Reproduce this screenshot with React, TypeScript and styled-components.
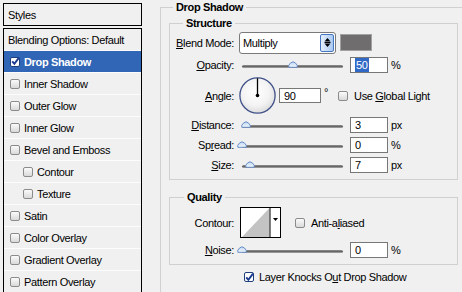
import React from "react";
import styled, { createGlobalStyle } from "styled-components";

const GlobalStyle = createGlobalStyle`
  html, body { margin: 0; padding: 0; background: #f0f0f0; overflow: hidden; }
  body {
    font-family: "Liberation Sans", Arial, sans-serif;
    font-size: 11px;
    color: #000;
    letter-spacing: -0.35px;
  }
  #root { width: 462px; height: 292px; overflow: hidden; }
`;

const Page = styled.div`
  display: flex;
  align-items: flex-start;
  box-sizing: border-box;
  width: 462px;
  height: 292px;
  padding: 3px 0 0 3px;
  overflow: hidden;
`;

/* ---------- left: styles list ---------- */
const StylesColumn = styled.div`
  width: 139px;
  flex: none;
  display: flex;
  flex-direction: column;
  gap: 2px;
`;

const StylesHeader = styled.div`
  box-sizing: border-box;
  height: 23px;
  border: 1px solid #000;
  padding-left: 4px;
  display: flex;
  align-items: center;
`;

const StyleList = styled.div`
  border: 1px solid #000;
  border-bottom: none;
  height: 300px;
`;

const StyleRow = styled.div<{ $selected?: boolean; $indent: number }>`
  box-sizing: border-box;
  height: 22px;
  border-bottom: 1px solid #fcfcfc;
  display: flex;
  align-items: center;
  gap: 4px;
  padding-left: ${(p) => p.$indent}px;
  background: ${(p) => (p.$selected ? "#3165b5" : "transparent")};
  color: ${(p) => (p.$selected ? "#fff" : "#000")};
  font-weight: ${(p) => (p.$selected ? "bold" : "normal")};
  white-space: nowrap;
`;

/* ---------- checkbox ---------- */
const Box = styled.span<{ $checked?: boolean }>`
  box-sizing: border-box;
  width: 10px;
  height: 10px;
  flex: none;
  border: 1px solid ${(p) => (p.$checked ? "#1f3f7c" : "#8b8b8b")};
  border-radius: 2px;
  background: ${(p) => (p.$checked ? "#fff" : "linear-gradient(#fbfbfb, #d9d9d9)")};
  display: flex;
  align-items: center;
  justify-content: center;
  overflow: visible;
`;

const CheckMark = () => (
  <svg width="9" height="9" viewBox="0 0 9 9" style={{ overflow: "visible" }}>
    <path d="M1.2 4.3 L3.4 6.8 L8 0.6" fill="none" stroke="#1b3a8f" strokeWidth="1.9" />
  </svg>
);

const CheckBox: React.FC<{ checked?: boolean }> = ({ checked }) => (
  <Box $checked={checked}>{checked ? <CheckMark /> : null}</Box>
);

/* ---------- right: group boxes ---------- */
const Group = styled.fieldset<{ $width: number }>`
  margin: 0;
  padding: 0;
  min-width: 0;
  border: 1px solid #d0d0d0;
  width: ${(p) => p.$width}px;
  box-sizing: border-box;
  flex: none;
`;

const GroupTitle = styled.legend<{ $offset: number }>`
  margin-left: ${(p) => p.$offset}px;
  padding: 0 3px;
  font-weight: bold;
  line-height: 13px;
  height: 13px;
`;

const EffectPanel = styled(Group)`
  margin: -2px 0 0 18px;
  height: 310px;
`;

const EffectBody = styled.div`
  padding-left: 8px;
  display: flex;
  flex-direction: column;
  align-items: flex-start;
`;

const StructureGroup = styled(Group)`
  margin-top: 3px;
`;

const QualityGroup = styled(Group)`
  margin-top: 11px;
`;

const GroupBody = styled.div<{ $top: number; $bottom: number }>`
  display: flex;
  flex-direction: column;
  padding: ${(p) => p.$top}px 0 ${(p) => p.$bottom}px 0;
`;

const FieldRow = styled.div<{ $h: number }>`
  height: ${(p) => p.$h}px;
  display: flex;
  align-items: center;
  white-space: nowrap;
`;

const FieldLabel = styled.span`
  width: 64px;
  flex: none;
  text-align: right;
  margin-right: 5px;
`;

const Accel = styled.span`
  text-decoration: underline;
  text-underline-offset: 1px;
`;

/* select */
const Select = styled.div`
  box-sizing: border-box;
  width: 97px;
  height: 22px;
  border: 1px solid #7a7a7a;
  border-radius: 3px;
  background: #fff;
  display: flex;
  align-items: stretch;
  padding: 1px;
  flex: none;
`;

const SelectText = styled.span`
  flex: 1;
  padding-left: 2px;
  display: flex;
  align-items: center;
`;

const SelectButton = styled.span`
  box-sizing: border-box;
  width: 14px;
  border: 1px solid #4675c2;
  border-radius: 2px;
  background: linear-gradient(to right, #e6f0fc, #a9c9f0);
  display: flex;
  align-items: center;
  justify-content: center;
`;

const Swatch = styled.span`
  box-sizing: border-box;
  width: 32px;
  height: 17px;
  margin-left: 4px;
  border: 1px solid #a2a2a2;
  background: #6f6d6d;
  flex: none;
`;

/* slider */
const Slider = styled.div`
  position: relative;
  width: 107px;
  height: 10px;
  flex: none;
  margin-top: 1px;
`;

const Track = styled.div`
  margin: 4px 3px 0 3px;
  height: 3px;
  border-radius: 2px;
  background: linear-gradient(#9a9a9a, #5f5f5f 45%, #8c8c8c 80%, #c8c8c8);
`;

const Thumb = styled.svg`
  position: absolute;
  top: 0;
`;

const SliderControl: React.FC<{ pct: number }> = ({ pct }) => (
  <Slider>
    <Track />
    <Thumb
      width="10"
      height="7"
      viewBox="0 0 10 7"
      style={{ left: `${3 + pct * 1.01 - 5}px` }}
    >
      <defs>
        <linearGradient id="thumbG" x1="0" y1="0" x2="0" y2="1">
          <stop offset="0" stopColor="#bcd6f3" />
          <stop offset="1" stopColor="#f4f8fd" />
        </linearGradient>
      </defs>
      <path
        d="M0.8 6.3 L0.8 4.2 Q2.5 1.2 5 0.8 Q7.5 1.2 9.2 4.2 L9.2 6.3 Z"
        fill="url(#thumbG)"
        stroke="#5b82c2"
        strokeWidth="0.9"
      />
    </Thumb>
  </Slider>
);

/* number box */
const NumberBox = styled.div<{ $w: number; $h: number; $ml: number }>`
  box-sizing: border-box;
  width: ${(p) => p.$w}px;
  height: ${(p) => p.$h}px;
  margin-left: ${(p) => p.$ml}px;
  border: 1px solid #777;
  background: #fff;
  padding-left: 4px;
  display: flex;
  align-items: center;
  flex: none;
`;

const Selected = styled.span`
  background: #3169c6;
  color: #fff;
  padding: 0 1px;
  line-height: 14px;
`;

const Unit = styled.span`
  margin-left: 3px;
`;

const Degree = styled.span`
  margin: -7px 0 0 3px;
`;

const DialWrap = styled.span`
  display: block;
  width: 37px;
  height: 37px;
  flex: none;
`;

const Dial = () => (
  <DialWrap>
    <svg width="37" height="37" viewBox="0 0 37 37">
      <defs>
        <radialGradient id="dialG" cx="0.45" cy="0.4" r="0.65">
          <stop offset="0" stopColor="#ffffff" />
          <stop offset="0.6" stopColor="#f3f3f3" />
          <stop offset="1" stopColor="#d8d8d8" />
        </radialGradient>
      </defs>
      <circle cx="18.5" cy="18.5" r="17.6" fill="url(#dialG)" stroke="#3f5089" strokeWidth="1.3" />
      <line x1="18.5" y1="18.5" x2="18.5" y2="1.2" stroke="#000" strokeWidth="1.3" />
      <circle cx="18.5" cy="18.5" r="1.8" fill="#000" />
    </svg>
  </DialWrap>
);

const InlineCheck = styled.label<{ $ml: number }>`
  display: flex;
  align-items: center;
  gap: 6px;
  margin-left: ${(p) => p.$ml}px;
  white-space: nowrap;
`;

const ContourWrap = styled.span`
  display: block;
  width: 41px;
  height: 31px;
  margin-left: 1px;
  flex: none;
`;

const ContourPicker = () => (
  <ContourWrap>
    <svg width="41" height="31" viewBox="0 0 41 31">
      <rect x="0.5" y="0.5" width="40" height="30" fill="#fff" stroke="#000" />
      <polygon points="2,30 29.5,1 29.5,30" fill="#c3c3c3" />
      <line x1="30" y1="0.5" x2="30" y2="30.5" stroke="#000" />
      <polygon points="33,11 38,11 35.5,14" fill="#000" />
    </svg>
  </ContourWrap>
);

const KnockRow = styled.label`
  display: flex;
  align-items: center;
  gap: 5px;
  height: 14px;
  margin: 5px 0 0 75px;
  white-space: nowrap;
`;

const styleItems: { label: string; indent: number; checked?: boolean; selected?: boolean }[] = [
  { label: "Drop Shadow", indent: 6, checked: true, selected: true },
  { label: "Inner Shadow", indent: 6 },
  { label: "Outer Glow", indent: 6 },
  { label: "Inner Glow", indent: 6 },
  { label: "Bevel and Emboss", indent: 6 },
  { label: "Contour", indent: 19 },
  { label: "Texture", indent: 19 },
  { label: "Satin", indent: 6 },
  { label: "Color Overlay", indent: 6 },
  { label: "Gradient Overlay", indent: 6 },
  { label: "Pattern Overlay", indent: 6 },
];

export default function App() {
  return (
    <>
      <GlobalStyle />
      <Page>
        <StylesColumn>
          <StylesHeader>Styles</StylesHeader>
          <StyleList>
            <StyleRow $indent={4}>Blending Options: Default</StyleRow>
            {styleItems.map((it) => (
              <StyleRow key={it.label} $indent={it.indent} $selected={it.selected}>
                <CheckBox checked={it.checked} />
                <span>{it.label}</span>
              </StyleRow>
            ))}
          </StyleList>
        </StylesColumn>

        <EffectPanel $width={320}>
          <GroupTitle $offset={12}>Drop Shadow</GroupTitle>
          <EffectBody>
            <StructureGroup $width={289}>
              <GroupTitle $offset={13}>Structure</GroupTitle>
              <GroupBody $top={1} $bottom={4}>
                <FieldRow $h={23}>
                  <FieldLabel>
                    <Accel>B</Accel>lend Mode:
                  </FieldLabel>
                  <Select>
                    <SelectText>Multiply</SelectText>
                    <SelectButton>
                      <svg width="7" height="11" viewBox="0 0 7 11">
                        <polygon points="3.5,1 6.5,4.5 0.5,4.5" fill="#000" />
                        <rect x="0.5" y="5" width="6" height="1" fill="#000" />
                        <polygon points="0.5,6.5 6.5,6.5 3.5,10" fill="#000" />
                      </svg>
                    </SelectButton>
                  </Select>
                  <Swatch />
                </FieldRow>
                <FieldRow $h={22}>
                  <FieldLabel>
                    <Accel>O</Accel>pacity:
                  </FieldLabel>
                  <SliderControl pct={50} />
                  <NumberBox $w={38} $h={16} $ml={4}>
                    <Selected>50</Selected>
                  </NumberBox>
                  <Unit>%</Unit>
                </FieldRow>
                <FieldRow $h={39}>
                  <FieldLabel>
                    <Accel>A</Accel>ngle:
                  </FieldLabel>
                  <Dial />
                  <NumberBox $w={42} $h={15} $ml={3}>
                    90
                  </NumberBox>
                  <Degree>°</Degree>
                  <InlineCheck $ml={10}>
                    <CheckBox />
                    <span>
                      Use <Accel>G</Accel>lobal Light
                    </span>
                  </InlineCheck>
                </FieldRow>
                <FieldRow $h={20}>
                  <FieldLabel>
                    <Accel>D</Accel>istance:
                  </FieldLabel>
                  <SliderControl pct={4} />
                  <NumberBox $w={38} $h={16} $ml={4}>
                    3
                  </NumberBox>
                  <Unit>px</Unit>
                </FieldRow>
                <FieldRow $h={20}>
                  <FieldLabel>
                    Sp<Accel>r</Accel>ead:
                  </FieldLabel>
                  <SliderControl pct={0} />
                  <NumberBox $w={38} $h={16} $ml={4}>
                    0
                  </NumberBox>
                  <Unit>%</Unit>
                </FieldRow>
                <FieldRow $h={20}>
                  <FieldLabel>
                    <Accel>S</Accel>ize:
                  </FieldLabel>
                  <SliderControl pct={8} />
                  <NumberBox $w={38} $h={16} $ml={4}>
                    7
                  </NumberBox>
                  <Unit>px</Unit>
                </FieldRow>
              </GroupBody>
            </StructureGroup>

            <QualityGroup $width={289}>
              <GroupTitle $offset={14}>Quality</GroupTitle>
              <GroupBody $top={1} $bottom={4}>
                <FieldRow $h={35}>
                  <FieldLabel>Contour:</FieldLabel>
                  <ContourPicker />
                  <InlineCheck $ml={14}>
                    <CheckBox />
                    <span>
                      Anti-a<Accel>l</Accel>iased
                    </span>
                  </InlineCheck>
                </FieldRow>
                <FieldRow $h={20}>
                  <FieldLabel>
                    <Accel>N</Accel>oise:
                  </FieldLabel>
                  <SliderControl pct={0} />
                  <NumberBox $w={38} $h={16} $ml={4}>
                    0
                  </NumberBox>
                  <Unit>%</Unit>
                </FieldRow>
              </GroupBody>
            </QualityGroup>

            <KnockRow>
              <CheckBox checked />
              <span>
                Layer Knocks O<Accel>u</Accel>t Drop Shadow
              </span>
            </KnockRow>
          </EffectBody>
        </EffectPanel>
      </Page>
    </>
  );
}
